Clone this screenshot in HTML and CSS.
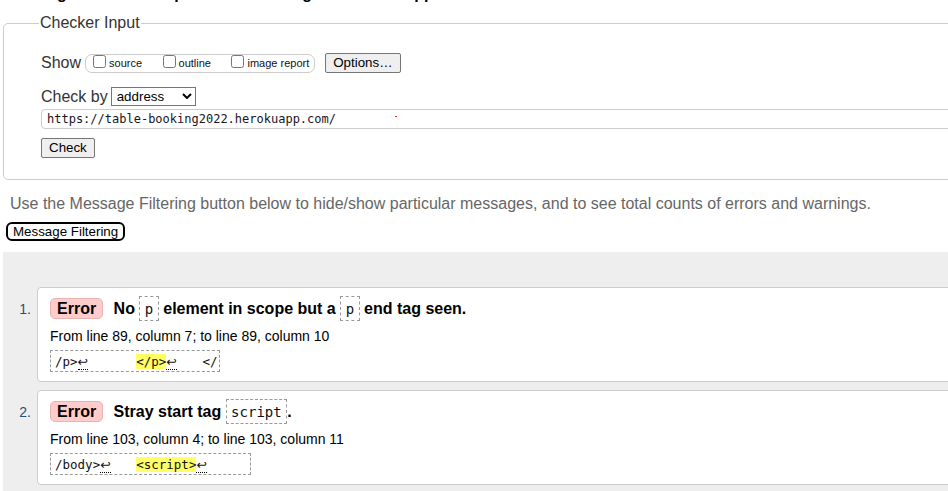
FILE: index.html
```html
<!DOCTYPE html>
<html lang="en">
<head>
<meta charset="utf-8">
<title>Nu Html Checker</title>
<link rel="stylesheet" href="styles.css">
</head>
<body>
<div class="page">
  <h2 class="results-title">Showing results for https://table-booking2022.herokuapp.com/</h2>
  <fieldset class="checker">
    <legend>Checker Input</legend>
    <div class="checker-body">
      <div class="row show-row">
        <span class="row-label show-label">Show</span>
        <span class="show-group">
          <label class="opt"><input type="checkbox"><span>source</span></label>
          <label class="opt"><input type="checkbox"><span>outline</span></label>
          <label class="opt"><input type="checkbox"><span>image report</span></label>
        </span>
        <button class="btn options-btn" type="button">Options…</button>
      </div>
      <div class="row check-row">
        <span class="row-label check-label">Check by</span>
        <span class="select-wrap">
          <select class="select"><option>address</option></select>
          <svg class="chev" viewBox="0 0 10 6" aria-hidden="true"><path d="M1 1 L5 5 L9 1" fill="none" stroke="#000" stroke-width="2"/></svg>
        </span>
      </div>
      <div class="url-wrap">
        <input class="url" type="text" value="https://table-booking2022.herokuapp.com/">
        <span class="caret-dot"></span>
      </div>
      <button class="btn check-btn" type="button">Check</button>
    </div>
  </fieldset>
  <p class="hint">Use the Message Filtering button below to hide/show particular messages, and to see total counts of errors and warnings.</p>
  <button class="filter-btn" type="button">Message Filtering</button>
  <section class="results">
    <ol class="messages">
      <li class="message">
        <span class="num">1.</span>
        <div class="card">
          <p class="msg"><strong class="badge">Error</strong> No <code class="c">p</code> element in scope but a <code class="c">p</code> end tag seen.</p>
          <p class="loc">From line 89, column 7; to line 89, column 10</p>
          <div class="extract">/p&gt;<span class="lf">↩</span>      <b>&lt;/p&gt;</b><span class="lf">↩</span>   &lt;/</div>
        </div>
      </li>
      <li class="message">
        <span class="num">2.</span>
        <div class="card">
          <p class="msg"><strong class="badge">Error</strong> Stray start tag <code class="c">script</code>.</p>
          <p class="loc">From line 103, column 4; to line 103, column 11</p>
          <div class="extract">/body&gt;<span class="lf">↩</span>   <b>&lt;script&gt;</b><span class="lf">↩</span>     </div>
        </div>
      </li>
    </ol>
  </section>
</div>
</body>
</html>
```
FILE: styles.css
```css
html, body {
  margin: 0;
  padding: 0;
  background: #fff;
}
body {
  overflow: hidden;
  font-family: "Liberation Sans", Arial, sans-serif;
  color: #000;
}
.page {
  width: 1000px;
}
.results-title {
  margin: -15px 0 0 0;
  font-size: 16px;
  line-height: 18px;
  font-weight: bold;
  white-space: nowrap;
}
.checker {
  margin: 11px 0 0 3px;
  padding: 0 0 0 37px;
  border: 1px solid #ccc;
  border-radius: 5px;
  min-width: 0;
}
.checker legend {
  margin-left: -2px;
  padding: 0 1px;
  font-size: 16px;
  line-height: 18px;
  color: #333;
}
.checker-body {
  padding: 21px 0 21px 0;
}
.row {
  display: flex;
  align-items: center;
}
.row-label {
  font-size: 16px;
  line-height: 18px;
  color: #333;
}
.show-row {
  height: 20px;
}
.show-label {
  margin-right: 4px;
}
.show-group {
  display: flex;
  align-items: flex-start;
  gap: 20.5px;
  height: 17px;
  padding: 0 5px 0 7px;
  border: 1px solid #ccc;
  border-radius: 7px;
}
.opt {
  display: flex;
  align-items: flex-start;
}
.opt input {
  width: 13px;
  height: 13px;
  margin: 0 3px 0 0;
}
.opt span {
  font-size: 11px;
  line-height: 13px;
  padding-top: 2px;
  color: #111;
}
.btn {
  height: 20px;
  padding: 0 7px;
  border: 1px solid #767676;
  border-radius: 2px;
  background: #efefef;
  color: #000;
  font-family: "Liberation Sans", Arial, sans-serif;
  font-size: 13.33px;
  line-height: 18px;
}
.options-btn {
  margin-left: 10px;
}
.check-row {
  height: 19px;
  margin-top: 14px;
}
.check-label {
  margin-right: 3px;
}
.select-wrap {
  position: relative;
  display: inline-block;
  height: 19px;
}
.select {
  appearance: none;
  -webkit-appearance: none;
  display: block;
  width: 85px;
  height: 19px;
  margin: 0;
  padding: 0 0 0 5px;
  border: 1px solid #767676;
  border-radius: 0;
  background: #fff;
  color: #000;
  font-family: "Liberation Sans", Arial, sans-serif;
  font-size: 13.33px;
}
.chev {
  position: absolute;
  right: 4px;
  top: 6px;
  width: 10px;
  height: 6px;
  pointer-events: none;
}
.url-wrap {
  position: relative;
  margin-top: 3px;
}
.url {
  display: block;
  width: 100%;
  box-sizing: border-box;
  height: 20px;
  margin: 0;
  padding: 0 5px;
  border: 1px solid #ccc;
  border-radius: 4px;
  font-family: "DejaVu Sans Mono", monospace;
  font-size: 12px;
  color: #1a1424;
}
.caret-dot {
  position: absolute;
  left: 354px;
  top: 7px;
  width: 2px;
  height: 1px;
  background: #e22;
}
.check-btn {
  display: block;
  margin-top: 9px;
}
.hint {
  margin: 15px 0 0 10px;
  font-size: 16px;
  line-height: 18px;
  color: #666;
  white-space: nowrap;
}
.filter-btn {
  display: block;
  height: 19px;
  margin: 9px 0 0 6px;
  padding: 0 5px;
  border: 2px solid #000;
  border-radius: 6px;
  background: #fff;
  color: #000;
  font-family: "Liberation Sans", Arial, sans-serif;
  font-size: 13.33px;
  line-height: 15px;
}
.results {
  margin: 11px 0 0 3px;
  padding: 35px 0 30px 0;
  background: #eee;
}
.messages {
  list-style: none;
  margin: 0;
  padding: 0;
}
.message {
  display: grid;
  grid-template-columns: 34px 1fr;
  align-items: baseline;
  margin-bottom: 8px;
}
.num {
  font-size: 14px;
  line-height: 16px;
  text-align: right;
  padding-right: 6px;
  color: #2d4e73;
}
.card {
  background: #fff;
  border: 1px solid #ccc;
  border-radius: 4px;
  padding: 8px 12px 9px;
}
.msg {
  margin: 0;
  font-size: 16px;
  line-height: 17px;
  font-weight: bold;
  white-space: nowrap;
}
.badge {
  display: inline-block;
  margin-right: 6px;
  padding: 1px 6px;
  line-height: 17px;
  border: 1px solid #e9b3b3;
  border-radius: 5px;
  background: #fcc;
}
.c {
  display: inline-block;
  padding: 4px 4.5px 3px;
  border: 1px dashed #999;
  font-family: "DejaVu Sans Mono", monospace;
  font-size: 14px;
  font-weight: normal;
  line-height: 16px;
  color: #111;
}
.loc {
  margin: 7px 0 0;
  font-size: 14px;
  line-height: 16px;
}
.extract {
  width: fit-content;
  margin-top: 6px;
  padding: 3px 2px 2px 4px;
  border: 1px dashed #999;
  font-family: "DejaVu Sans Mono", monospace;
  font-size: 12.5px;
  line-height: 15px;
  white-space: pre;
  color: #111;
}
.extract b {
  font-weight: normal;
  background: #ff6;
}
.lf {
  margin-right: 3px;
  font-family: "DejaVu Sans", sans-serif;
  border-bottom: 1px dotted #000;
}
```
